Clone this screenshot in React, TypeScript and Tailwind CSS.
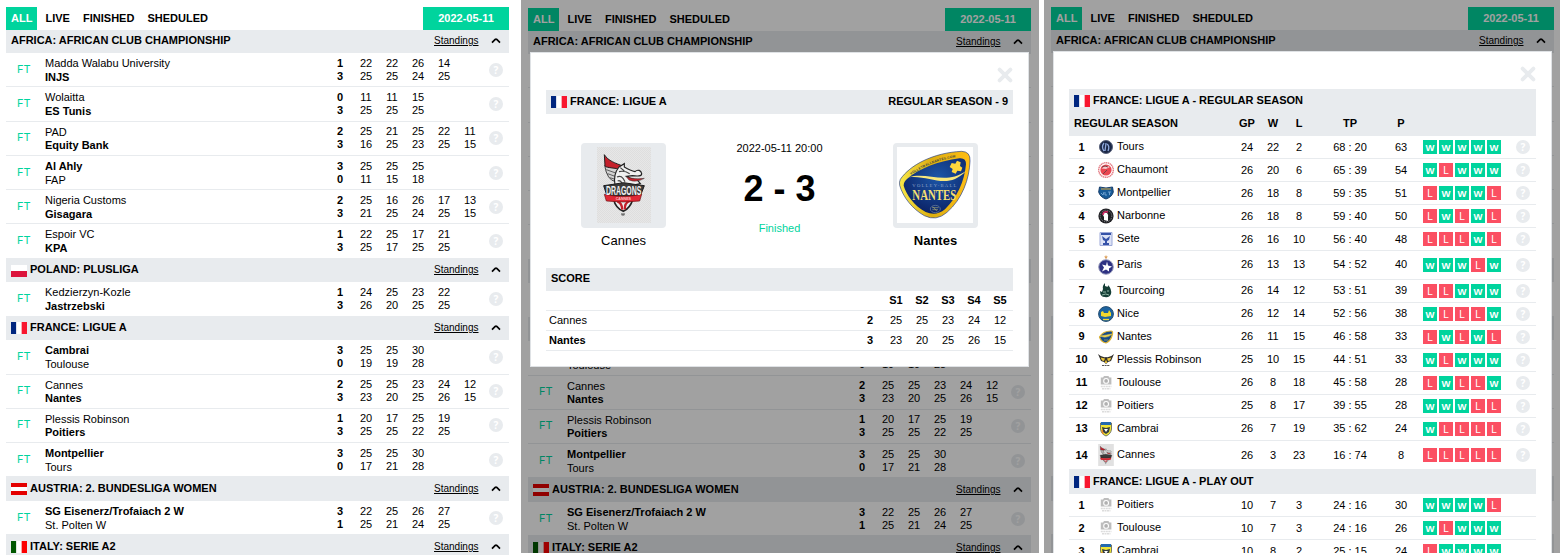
import React from "react";

type FlagCode = "pl" | "fr" | "at" | "it";
type Side = [string, number, number[]];
type Match = { h: string; home: Side; away: Side; tight?: boolean; last?: boolean };
type League = { title: string; flag?: FlagCode; head: string; flagPad?: string; matches: Match[] };

const leagues: League[] = [
  {
    title: "AFRICA: AFRICAN CLUB CHAMPIONSHIP",
    head: "h-[23px] pt-[4px]",
    matches: [
      { h: "h-[34px]", home: ["Madda Walabu University", 1, [22, 22, 26, 14]], away: ["INJS", 3, [25, 25, 24, 25]] },
      { h: "h-[35px]", home: ["Wolaitta", 0, [11, 11, 15]], away: ["ES Tunis", 3, [25, 25, 25]] },
      { h: "h-[34px]", home: ["PAD", 2, [25, 21, 25, 22, 11]], away: ["Equity Bank", 3, [16, 25, 23, 25, 15]], tight: true },
      { h: "h-[34px]", home: ["Al Ahly", 3, [25, 25, 25]], away: ["FAP", 0, [11, 15, 18]] },
      { h: "h-[34px]", home: ["Nigeria Customs", 2, [25, 16, 26, 17, 13]], away: ["Gisagara", 3, [21, 25, 24, 25, 15]] },
      { h: "h-[34px]", home: ["Espoir VC", 1, [22, 25, 17, 21]], away: ["KPA", 3, [25, 17, 25, 25]], last: true },
    ],
  },
  {
    title: "POLAND: PLUSLIGA",
    flag: "pl",
    head: "h-[24px] pt-[5px]",
    flagPad: "mt-[2px]",
    matches: [
      { h: "h-[34px]", home: ["Kedzierzyn-Kozle", 1, [24, 25, 23, 22]], away: ["Jastrzebski", 3, [26, 20, 25, 25]], last: true },
    ],
  },
  {
    title: "FRANCE: LIGUE A",
    flag: "fr",
    head: "h-[24px] pt-[5px]",
    flagPad: "mt-[1px]",
    matches: [
      { h: "h-[35px]", home: ["Cambrai", 3, [25, 25, 30]], away: ["Toulouse", 0, [19, 19, 28]] },
      { h: "h-[34px]", home: ["Cannes", 2, [25, 25, 23, 24, 12]], away: ["Nantes", 3, [23, 20, 25, 26, 15]], tight: true },
      { h: "h-[34px]", home: ["Plessis Robinson", 1, [20, 17, 25, 19]], away: ["Poitiers", 3, [25, 25, 22, 25]], tight: true },
      { h: "h-[33px]", home: ["Montpellier", 3, [25, 25, 30]], away: ["Tours", 0, [17, 21, 28]], last: true },
    ],
  },
  {
    title: "AUSTRIA: 2. BUNDESLIGA WOMEN",
    flag: "at",
    head: "h-[25px] pt-[6px]",
    flagPad: "mt-[1px]",
    matches: [
      { h: "h-[33px]", home: ["SG Eisenerz/Trofaiach 2 W", 3, [22, 25, 26, 27]], away: ["St. Polten W", 1, [25, 21, 24, 25]], last: true },
    ],
  },
  { title: "ITALY: SERIE A2", flag: "it", head: "h-[24px] pt-[6px]", flagPad: "mt-[1px]", matches: [] },
];

function Flag({ code }: { code: FlagCode }) {
  const vertical = (a: string, c: string) => (
    <>
      <rect width="5.33" height="12" fill={a} />
      <rect x="5.33" width="5.34" height="12" fill="#fff" />
      <rect x="10.67" width="5.33" height="12" fill={c} />
    </>
  );
  return (
    <svg width="16" height="12" viewBox="0 0 16 12" className="block shrink-0">
      {code === "fr" && vertical("#00267f", "#f8162f")}
      {code === "it" && vertical("#005700", "#fc0000")}
      {code === "pl" && (
        <>
          <rect width="16" height="6" fill="#fff" />
          <rect y="6" width="16" height="6" fill="#dc143c" />
        </>
      )}
      {code === "at" && (
        <>
          <rect width="16" height="12" fill="#e40000" />
          <rect y="4" width="16" height="4" fill="#fff" />
        </>
      )}
    </svg>
  );
}

function Chevron() {
  return (
    <svg width="10" height="7" viewBox="0 0 10 7" className="block">
      <path d="M1 5.6 L4.2 2.5 Q5 1.8 5.8 2.5 L9 5.6" fill="none" stroke="#000" strokeWidth="1.7" />
    </svg>
  );
}

function Help() {
  return (
    <span className="flex size-[14px] items-center justify-center rounded-full bg-[#e8ebee] font-['Noto_Sans'] text-[10px] leading-[14px] font-bold text-white">
      ?
    </span>
  );
}

function Close() {
  return (
    <svg width="16" height="16" viewBox="0 0 16 16" className="block">
      <path d="M2.6 2.6 L13.4 13.4 M13.4 2.6 L2.6 13.4" stroke="#e8ebee" strokeWidth="3.8" strokeLinecap="round" />
    </svg>
  );
}

function MatchRow({ m }: { m: Match }) {
  const sides = [m.home, m.away];
  const win = m.home[1] > m.away[1] ? 0 : 1;
  return (
    <div className={`flex ${m.h} ${m.last ? "" : "border-b border-[#e8ebee]"}`}>
      <div className={`w-[39px] pl-[11px] font-['Inter'] text-[11px] leading-[13px] text-[#00d49d] ${m.tight ? "pt-[9px]" : "pt-[10px]"}`}>
        FT
      </div>
      <div className={`flex flex-1 flex-col pt-[4px] ${m.tight ? "" : "gap-px"}`}>
        {sides.map((s, i) => (
          <div key={i} className={i === win ? "font-bold" : ""}>{s[0]}</div>
        ))}
      </div>
      <div className={`w-[156px] ${m.tight ? "pt-[3px]" : "pt-[4px]"}`}>
        {sides.map((s, i) => (
          <div key={i} className="grid grid-cols-6 text-center">
            <span className="font-bold">{s[1]}</span>
            {s[2].map((n, j) => (
              <span key={j}>{n}</span>
            ))}
          </div>
        ))}
      </div>
      <div className={`flex w-[26px] justify-center ${m.tight ? "pt-[9px]" : "pt-[10px]"}`}>
        <Help />
      </div>
    </div>
  );
}

function Board() {
  return (
    <div className="w-[503px]">
      <div className="flex h-[23px] font-bold leading-[22px]">
        <div className="flex flex-1 gap-[3.1px]">
          <span className="bg-[#00d49d] px-[5px] text-white">ALL</span>
          <span className="px-[5px]">LIVE</span>
          <span className="px-[5px]">FINISHED</span>
          <span className="px-[5px]">SHEDULED</span>
        </div>
        <div className="w-[86px] bg-[#00d49d] text-center text-white">2022-05-11</div>
      </div>
      {leagues.map((l) => (
        <div key={l.title}>
          <div className={`flex items-start bg-[#e8ebee] pl-[5px] ${l.head}`}>
            {l.flag && (
              <span className={`mr-[3px] ${l.flagPad ?? ""}`}>
                <Flag code={l.flag} />
              </span>
            )}
            <span className="flex-1 font-bold">{l.title}</span>
            <span className="text-[10px] underline">Standings</span>
            <span className="flex w-[30.5px] justify-center pt-[3px] pl-[4.5px]">
              <Chevron />
            </span>
          </div>
          {l.matches.map((m) => (
            <MatchRow key={m.home[0]} m={m} />
          ))}
        </div>
      ))}
    </div>
  );
}

function DragonArt() {
  return (
    <>
      <path d="M23 55 Q42 66 66 60 L56 104 Q30 100 23 55Z" fill="#d2d2d2" stroke="#444" strokeWidth="3" />
      <path d="M28 68 L56 78 M32 80 L54 88 M38 92 L52 96" stroke="#444" strokeWidth="2.5" />
      <path d="M22 23 C34 42 54 48 80 58 L66 66 C46 62 24 62 24 56Z" fill="#c4202b" stroke="#222" strokeWidth="3" />
      <path d="M54 114 C50 92 56 72 66 60 L82 50 L82 60 C92 66 104 72 114 74 C122 66 132 70 134 80 C134 88 122 88 106 86 L88 88 Q104 98 122 100 L130 110 L104 116 Z" fill="#f0f0f0" stroke="#222" strokeWidth="3.5" />
      <path d="M88 89 Q108 98 142 94 Q118 108 96 99Z" fill="#c4202b" stroke="#333" strokeWidth="1.5" />
      <path d="M66 74 Q82 70 98 80 M60 90 Q74 82 84 104 M70 62 L82 72 M62 102 Q70 98 76 110" fill="none" stroke="#444" strokeWidth="3.5" />
      <path d="M20 116 L48 112 L80 107 L112 112 L142 116 L130 147 H30Z" fill="#3a3a3a" stroke="#1b1b1b" strokeWidth="3" />
      <path d="M50 158 Q56 184 79 193 Q100 182 107 158Z" fill="#ececec" stroke="#222" strokeWidth="5" />
      <path d="M61 163 Q75 168 76 188 M98 162 Q82 168 84 187" fill="none" stroke="#c4202b" strokeWidth="7" />
      <path d="M22 142 Q79 154 134 142 L128 162 Q79 168 28 162Z" fill="#e02835" stroke="#611" strokeWidth="2" />
      <path d="M72 201 H84 M74 204 H82" stroke="#333" strokeWidth="2.5" />
    </>
  );
}

function DragonsLogo() {
  return (
    <svg width="54" height="76" viewBox="0 0 162 228" className="block">
      <defs>
        <pattern id="checks" width="6" height="6" patternUnits="userSpaceOnUse">
          <rect width="6" height="6" fill="#e7e7e7" />
          <rect width="3" height="3" fill="#dedede" />
          <rect x="3" y="3" width="3" height="3" fill="#dedede" />
        </pattern>
      </defs>
      <rect width="162" height="228" fill="url(#checks)" />
      <DragonArt />
      <text x="80" y="143" textAnchor="middle" textLength="106" lengthAdjust="spacingAndGlyphs" fontFamily="Liberation Sans" fontWeight="bold" fontSize="37" fill="#f2f2f2">DRAGONS</text>
      <text x="79" y="160" textAnchor="middle" textLength="46" lengthAdjust="spacingAndGlyphs" fontFamily="Liberation Sans" fontWeight="bold" fontSize="13" fill="#ffc4c4">CANNES</text>
    </svg>
  );
}

function NantesLogo() {
  return (
    <svg width="76" height="76" viewBox="0 0 228 228" className="block bg-white">
      <defs>
        <linearGradient id="gold" x1="0" x2="1">
          <stop offset="0" stopColor="#f8e948" />
          <stop offset="0.45" stopColor="#dcae10" />
          <stop offset="1" stopColor="#ffbd14" />
        </linearGradient>
        <radialGradient id="navy" cx="0.55" cy="0.35" r="0.7">
          <stop offset="0" stopColor="#1c56a8" />
          <stop offset="1" stopColor="#0a1f62" />
        </radialGradient>
        <path id="arc" d="M42 84 Q100 42 182 30" />
      </defs>
      <path d="M10 97 C38 55 108 17 194 13 Q221 14 219 42 C217 96 196 156 150 196 Q118 224 82 206 C46 186 18 150 8 115 Q6 105 10 97Z" fill="url(#gold)" stroke="#27418c" strokeWidth="2" />
      <path d="M30 96 C64 66 124 42 188 34 Q208 33 207 52 C202 104 181 151 144 187 Q117 209 86 195 C52 177 28 143 20 116 Q20 104 30 96Z" fill="url(#navy)" />
      <path d="M34 91 C90 72 144 116 207 72 C150 132 98 82 34 91Z" fill="#f9e77b" />
      <path d="M164 48 L175 50 L180 41 L191 46 L189 57 L196 62 L192 73 L181 71 L176 80 L164 75 L167 66 L158 60Z" fill="#ffd63c" />
      <text fontFamily="Liberation Sans" fontWeight="bold" fontSize="10" fill="#3f4740" letterSpacing="0.6">
        <textPath href="#arc">VOLLEYBALLNANTES.COM</textPath>
      </text>
      <text x="112" y="119" textAnchor="middle" textLength="132" fontFamily="Liberation Serif" fontSize="14" fill="#8ea4c9">VOLLEY-BALL</text>
      <text x="112" y="159" textAnchor="middle" textLength="132" lengthAdjust="spacingAndGlyphs" fontFamily="Liberation Serif" fontWeight="bold" fontSize="43" fill="#f5df72">NANTES</text>
      <ellipse cx="115" cy="186" rx="15" ry="11" fill="none" stroke="#7187a5" strokeWidth="2" />
      <path d="M105 182 H125 M106 188 H123 M108 179 L120 193" stroke="#a6a676" strokeWidth="2" />
    </svg>
  );
}

function Backdrop({ children }: { children: React.ReactNode }) {
  return <div className="absolute inset-0 bg-black/37">{children}</div>;
}

function LeagueTitle({ left, right, low }: { left: string; right?: string; low?: boolean }) {
  return (
    <div className={`flex items-start bg-[#e8ebee] px-[5px] font-bold ${low ? "h-[25px] pt-[6px]" : "h-[24px] pt-[5px]"}`}>
      <span className="mt-[1px] mr-[3px]"><Flag code="fr" /></span>
      <span className="flex-1">{left}</span>
      <span>{right}</span>
    </div>
  );
}

function Team({ name, bold, children }: { name: string; bold?: boolean; children: React.ReactNode }) {
  return (
    <div className="flex w-[85px] flex-col items-center">
      <div className="flex h-[85px] w-full justify-center rounded-[4px] bg-[#e8ebee] pt-[4px]">{children}</div>
      <div className={`pt-[5px] text-[13px] leading-[16px] ${bold ? "font-bold" : ""}`}>{name}</div>
    </div>
  );
}

function MatchModal() {
  const rows: Side[] = [
    ["Cannes", 2, [25, 25, 23, 24, 12]],
    ["Nantes", 3, [23, 20, 25, 26, 15]],
  ];
  return (
    <div className="mt-[52px] ml-[9px] h-[315px] w-[499px] border border-[#dfe2e5] bg-white px-[15px]">
      <div className="flex h-[37px] justify-end pt-[14px]"><Close /></div>
      <LeagueTitle left="FRANCE: LIGUE A" right="REGULAR SEASON - 9" />
      <div className="flex h-[154px] justify-between px-[35px] pt-[29px]">
        <Team name="Cannes"><DragonsLogo /></Team>
        <div className="flex flex-col items-center">
          <div className="mt-[-1px]">2022-05-11 20:00</div>
          <div className="mt-[13px] text-[36px] leading-[42px] font-bold">2 - 3</div>
          <div className="mt-[12px] text-[#00d49d]">Finished</div>
        </div>
        <Team name="Nantes" bold><NantesLogo /></Team>
      </div>
      <div className="h-[23px] bg-[#e8ebee] pt-[4px] pl-[5px] font-bold">SCORE</div>
      <div className="flex h-[20px] justify-end border-b border-[#e8ebee] pt-[3px] font-bold">
        <div className="grid w-[130px] grid-cols-5 text-center">
          {["S1", "S2", "S3", "S4", "S5"].map((s) => <span key={s}>{s}</span>)}
        </div>
      </div>
      {rows.map((r, i) => (
        <div key={r[0]} className="flex h-[20px] border-b border-[#e8ebee] pt-[3px] pl-[3px]">
          <span className={`flex-1 ${i ? "font-bold" : ""}`}>{r[0]}</span>
          <div className="grid w-[156px] grid-cols-6 text-center">
            <span className="font-bold">{r[1]}</span>
            {r[2].map((n, j) => <span key={j}>{n}</span>)}
          </div>
        </div>
      ))}
    </div>
  );
}

function Crest({ team }: { team: string }) {
  const art: Record<string, React.ReactNode> = {
    Tours: (
      <>
        <circle cx="8" cy="8" r="6.5" fill="#1a2746" stroke="#59627b" />
        <path d="M6 4 Q3 8 6 12 M8 4 L7 12 M9 5 Q12 7 10 12" stroke="#8fa9dc" fill="none" strokeWidth="1.3" />
      </>
    ),
    Chaumont: (
      <>
        <circle cx="8" cy="8" r="7.3" fill="#fff" stroke="#e37880" strokeWidth="1.4" strokeDasharray="1.4 .5" />
        <circle cx="8" cy="8" r="5.6" fill="#e94650" />
        <path d="M3.5 6.5 Q8 2.5 12 5 L8 7 Z" fill="#f5c9cc" />
        <path d="M4 5 Q7 3 10 5 M5 12 L9 8" stroke="#78434a" fill="none" />
      </>
    ),
    Montpellier: (
      <>
        <path d="M1.5 2 Q8 4 14.5 2 L15.3 7 Q14 12 8 14 Q2 12 .7 7Z" fill="#185b98" stroke="#153c69" />
        <path d="M3 4 H13" stroke="#bc9c4a" strokeWidth="1.2" />
        <path d="M3 8 L5 10 L6 7 M7 7 V10 H9 M10 7 H13 M11.5 7 V10" stroke="#6fa0cf" fill="none" />
      </>
    ),
    Narbonne: (
      <>
        <circle cx="8" cy="8" r="7.6" fill="#202024" />
        <circle cx="8" cy="8" r="5.8" fill="none" stroke="#8b8d92" strokeDasharray="1 1" />
        <path d="M6 12 V9 L5 7 Q6 4 9 5 Q11 7 10 10 V13Z" fill="#fff" />
        <path d="M5 7 Q5 3 10 4" stroke="#d52c68" fill="none" strokeWidth="1.6" />
      </>
    ),
    Sete: (
      <>
        <path d="M2 1.5 H14 V14.5 H2Z" fill="#dce2f5" stroke="#9ca9d8" />
        <path d="M3 2 H13 V4 H3Z M4 5 L8 8 L12 5 L11 9 L9 10 V12 H11 V14 H5 V12 H7 V10 L5 9Z" fill="#3552a8" />
      </>
    ),
    Paris: (
      <>
        <path d="M8 0 L8.7 1.4 L10 1.5 L9 2.5 V4 L8 3 L7 4 V2.5 L6 1.5 L7.3 1.4Z" fill="#dca25e" transform="translate(0 -2)" />
        <circle cx="8" cy="10" r="7.3" fill="#2d3182" stroke="#9a9dbd" />
        <path d="M9 4.5 L10 8.5 L14 9.5 L11 11.5 L11 14.5 L8 12.5 L4 14.5 L6 10.5 L4 7.5 L8 8.5Z" fill="#fff" />
      </>
    ),
    Tourcoing: (
      <>
        <path d="M5 6 Q4 3 7 0 L7 3 Q11 5 10 2 Q14 6 13 11 Q11 15 7 14 Q2 14 2 8 L4 9Z" fill="#153f37" />
        <path d="M5 9 H8 M9 8 H11 M4 12 Q8 10 11 12" stroke="#91b7a6" fill="none" />
      </>
    ),
    Nice: (
      <>
        <circle cx="8" cy="8" r="7.4" fill="#1d64a0" stroke="#244d70" />
        <path d="M3 6 L5 5 L6 7 H10 L11 4 L13 7 V10 L7 11 L3 10Z" fill="#f2d72d" />
        <path d="M5 13.5 H11" stroke="#f0d638" strokeWidth="1.3" />
      </>
    ),
    Nantes: (
      <>
        <path d="M1.5 8 Q5 2 13 2 Q15 2 14.5 5 Q13 12 8 14 Q3 13 1.5 8Z" fill="#164b87" stroke="#dbb132" strokeWidth="1.2" />
        <path d="M2 7 Q9 6 14 5 Q9 10 2 7Z M6 11 H10" fill="#ead151" stroke="#ead151" strokeWidth=".5" />
      </>
    ),
    "Plessis Robinson": (
      <>
        <path d="M0 2 Q4 6 8 5 Q12 6 16 2 L13 9 L10 10 L8 12 L6 10 L3 9Z" fill="#302f2c" />
        <path d="M2.6 5.6 L7 6.6 L6 9 L4 8.4Z M13.4 5.6 L9 6.6 L10 9 L12 8.4Z M8 7.5 L9.4 11 H6.6Z" fill="#eac538" />
        <path d="M4 13.5 H12" stroke="#555" strokeDasharray="2 .6" />
      </>
    ),
    Cambrai: (
      <>
        <path d="M2.5 2 H13.5 V8 Q13 13 8 15 Q3 13 2.5 8Z" fill="#efe434" stroke="#555b54" strokeWidth=".8" />
        <path d="M3 1 H13 V4 H3Z" fill="#2369af" />
        <path d="M4 6 L8 7 L12 6 L11 11 L8 13 L5 11Z" fill="#343c3e" />
        <path d="M6 8 L10 8 L8 11Z" fill="#fff" />
        <path d="M4 9 L5 13" stroke="#e4872a" strokeWidth="1.5" />
      </>
    ),
  };
  if (team === "Cannes")
    return (
      <svg width="16" height="22" viewBox="0 0 162 228" className="block">
        <rect width="162" height="228" fill="#e1e1e1" />
        <DragonArt />
      </svg>
    );
  return (
    <svg width="16" height="16" viewBox="0 0 16 16" className="block overflow-visible">
      {art[team] ?? (
        <>
          <path d="M2.8 2.5 H5 L6 1 H10.4 L11.4 2.5 H13.4 V9.6 H2.8Z" fill="#bdbdbd" />
          <circle cx="8.1" cy="5.9" r="2.4" fill="#b0b0b0" stroke="#fff" strokeWidth="1.1" />
          <path d="M2.8 11.5 H13.4 M4 13.7 H12.4" stroke="#dcdcdc" strokeWidth="1.5" strokeDasharray="2 .5" />
        </>
      )}
    </svg>
  );
}

type Standing = [number, string, number, number, number, string, number, string];
const season: Standing[] = [
  [1, "Tours", 24, 22, 2, "68 : 20", 63, "WWWWW"],
  [2, "Chaumont", 26, 20, 6, "65 : 39", 54, "WLWWW"],
  [3, "Montpellier", 26, 18, 8, "59 : 35", 51, "LWWWL"],
  [4, "Narbonne", 26, 18, 8, "59 : 40", 50, "LWLWL"],
  [5, "Sete", 26, 16, 10, "56 : 40", 48, "LLLWL"],
  [6, "Paris", 26, 13, 13, "54 : 52", 40, "WWWLW"],
  [7, "Tourcoing", 26, 14, 12, "53 : 51", 39, "LLWWW"],
  [8, "Nice", 26, 12, 14, "52 : 56", 38, "WLLLW"],
  [9, "Nantes", 26, 11, 15, "46 : 58", 33, "LWLWL"],
  [10, "Plessis Robinson", 25, 10, 15, "44 : 51", 33, "WLWWW"],
  [11, "Toulouse", 26, 8, 18, "45 : 58", 28, "LWLLW"],
  [12, "Poitiers", 25, 8, 17, "39 : 55", 28, "WWWLL"],
  [13, "Cambrai", 26, 7, 19, "35 : 62", 24, "WLLLL"],
  [14, "Cannes", 26, 3, 23, "16 : 74", 8, "LLLLL"],
];
const playOut: Standing[] = [
  [1, "Poitiers", 10, 7, 3, "24 : 16", 30, "WWWWL"],
  [2, "Toulouse", 10, 7, 3, "24 : 16", 26, "WLWWW"],
  [3, "Cambrai", 10, 8, 2, "25 : 15", 24, "LWWWW"],
];

const columns = "grid grid-cols-[25px_23px_117px_26px_26px_26px_76px_26px_9px_78px_35px]";

function StandingRow({ s, help }: { s: Standing; help?: boolean }) {
  const [rank, name, gp, w, l, tp, p, form] = s;
  const shifted = !help || rank < 6 || rank === 14;
  const height =
    name === "Paris"
      ? "h-[29px] border-b pt-[7px]"
      : name === "Cannes"
        ? "h-[28px] pt-[7px]"
        : "h-[23px] border-b pt-[4px]";
  const num = shifted ? "pt-[1px]" : "";
  return (
    <div className={`${columns} border-[#e8ebee] text-center ${height}`}>
      <span className={`font-bold ${num}`}>{rank}</span>
      <span className={`flex justify-center ${name === "Cannes" ? "mt-[-4px]" : "mt-[-1px]"}`}><Crest team={name} /></span>
      <span className="text-left">{name}</span>
      <span className={num}>{gp}</span>
      <span className={num}>{w}</span>
      <span className={num}>{l}</span>
      <span className={num}>{tp}</span>
      <span className={num}>{p}</span>
      <span />
      <span className="flex gap-[2px]">
        {form.split("").map((f, i) => (
          <span key={i} className={`h-[14px] w-[14px] text-white ${f === "W" ? "bg-[#00d49d] text-[9.5px] leading-[15px] font-bold" : "bg-[#fb4f62] text-[10px] leading-[15px]"}`}>{f}</span>
        ))}
      </span>
      <span className="flex justify-center pl-[9px]">{help && <Help />}</span>
    </div>
  );
}

function StandingsModal() {
  return (
    <div className="mt-[51px] ml-[9px] h-[530px] w-[499px] border border-[#dfe2e5] bg-white px-[15px]">
      <div className="flex h-[37px] justify-end pt-[14px]"><Close /></div>
      <LeagueTitle left="FRANCE: LIGUE A - REGULAR SEASON" />
      <div className={`${columns} h-[23px] bg-[#e8ebee] pt-[4px] text-center font-bold`}>
        <span className="col-span-3 pl-[5px] text-left">REGULAR SEASON</span>
        <span>GP</span>
        <span>W</span>
        <span>L</span>
        <span>TP</span>
        <span>P</span>
      </div>
      {season.map((s) => <StandingRow key={s[1]} s={s} help />)}
      <LeagueTitle left="FRANCE: LIGUE A - PLAY OUT" low />
      {playOut.map((s) => <StandingRow key={s[1]} s={s} />)}
    </div>
  );
}

export default function App() {
  return (
    <div className="flex h-[556px] w-[1560px] overflow-hidden bg-white font-['Liberation_Sans',Arial,sans-serif] text-[11px] leading-[13px] text-black">
      <section className="h-[555px] w-[521px] overflow-hidden pt-[7px] pl-[6px]"><Board /></section>
      <section className="relative mr-[5px] h-[553px] w-[518px] overflow-hidden pt-[8px] pl-[7px]">
        <Board />
        <Backdrop><MatchModal /></Backdrop>
      </section>
      <section className="relative h-[553px] w-[516px] overflow-hidden pt-[7px] pl-[7px]">
        <Board />
        <Backdrop><StandingsModal /></Backdrop>
      </section>
    </div>
  );
}
